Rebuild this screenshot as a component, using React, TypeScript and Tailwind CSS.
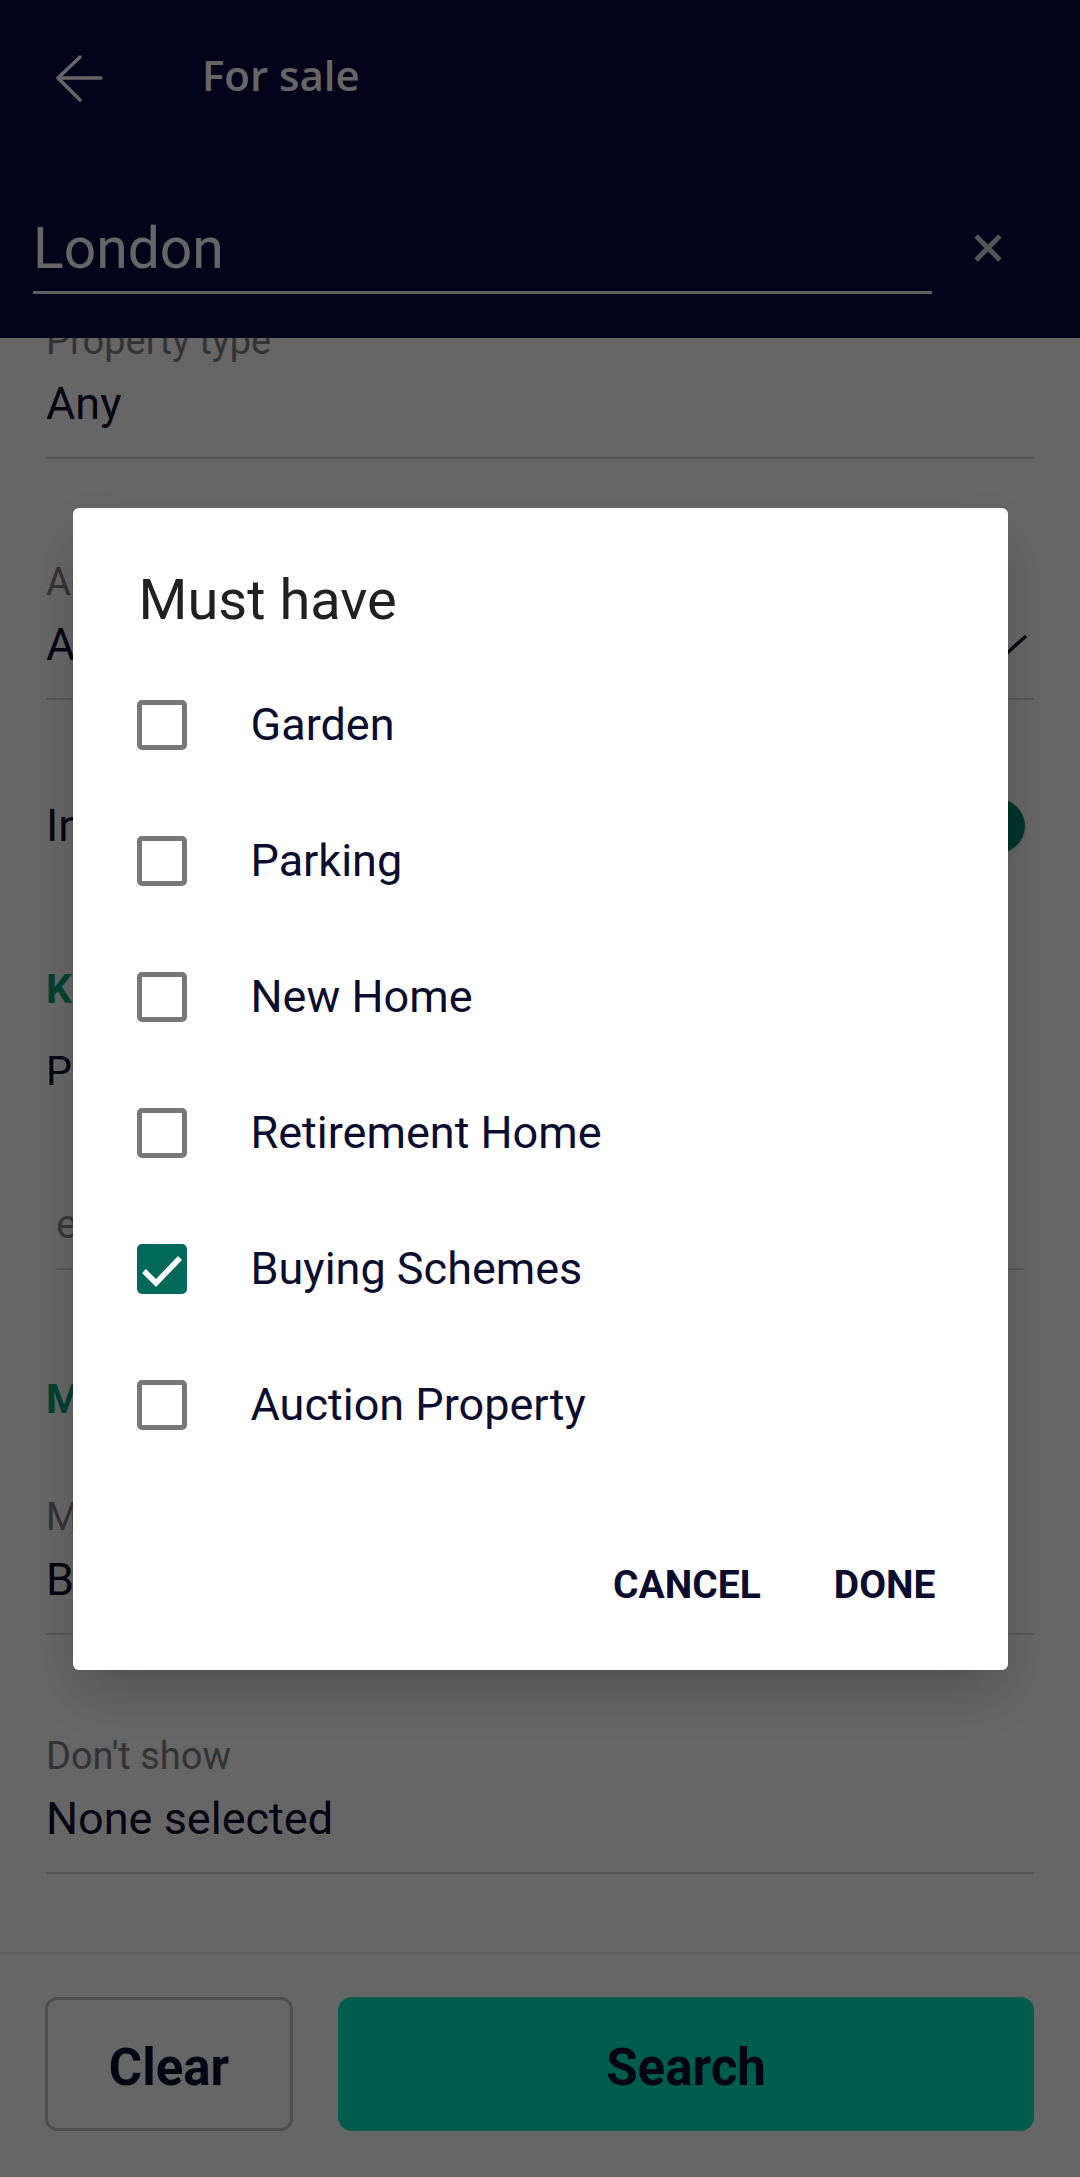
import React from "react";

const options = [
  { label: "Garden", checked: false },
  { label: "Parking", checked: false },
  { label: "New Home", checked: false },
  { label: "Retirement Home", checked: false },
  { label: "Buying Schemes", checked: true },
  { label: "Auction Property", checked: false },
];

function Field({ label, value, className = "" }: { label: string; value: string; className?: string }) {
  return (
    <div className={`border-b-2 border-[#d5d5d5] pb-[26px] ${className}`}>
      <div className="h-[44px] text-[38px] leading-[44px] text-[#808080]">{label}</div>
      <div className="mt-[14px] h-[54px] text-[45px] leading-[54px] text-[#0b0c2e]">{value}</div>
    </div>
  );
}

function Checkbox({ checked }: { checked: boolean }) {
  if (checked) {
    return (
      <div className="w-[50px] h-[50px] rounded-[5px] bg-[#02695a] shrink-0">
        <svg width="50" height="50" viewBox="0 0 50 50">
          <path d="M7 27 L19 39 L43 14" fill="none" stroke="white" strokeWidth="5.5" />
        </svg>
      </div>
    );
  }
  return <div className="w-[50px] h-[50px] rounded-[5px] border-[5px] border-[#777777] shrink-0" />;
}

export default function App() {
  return (
    <div className="relative w-[1080px] h-[2177px] overflow-hidden bg-white font-['Roboto',sans-serif] flex flex-col">
      {/* Top bar */}
      <header className="relative z-[1] h-[338px] shrink-0 bg-[#050841] flex flex-col">
        <div className="mt-[55px] h-[48px] flex items-center pl-[55px]">
          <svg width="48" height="48" viewBox="0 0 48 48">
            <path d="M46 23 H3 M25 2 L3 23 L25 45" fill="none" stroke="white" strokeWidth="3.5" strokeLinecap="round" strokeLinejoin="round" />
          </svg>
          <span className="ml-[99px] mb-[8px] font-['Open_Sans',sans-serif] font-semibold text-[42px] leading-[44px] text-white">
            For sale
          </span>
        </div>
        <div className="mt-[114px] flex items-start pl-[33px] pr-[77px]">
          <div className="w-[900px] border-b-[3px] border-[#eceef5] pb-[10px]">
            <div className="text-[57px] leading-[64px] text-white">London</div>
          </div>
          <svg className="ml-[41px] mt-[16px]" width="30" height="30" viewBox="0 0 30 30">
            <path d="M3 3 L27 27 M27 3 L3 27" stroke="#d4d4d4" strokeWidth="5" />
          </svg>
        </div>
      </header>

      {/* Form content (scrolled) */}
      <main className="flex-1 overflow-hidden px-[46px]">
        <div className="mt-[-19px] flex flex-col">
          <Field label="Property type" value="Any" />
          <div className="mt-[101px] relative">
            <Field label="Added to site" value="Anytime" />
            <svg className="absolute right-[6px] top-[73px]" width="44" height="24" viewBox="0 0 44 24">
              <path d="M2 3 L22 21 L42 3" fill="none" stroke="#1c1c2c" strokeWidth="3.5" />
            </svg>
          </div>
          <div className="mt-[99px] h-[54px] flex items-center justify-between">
            <span className="text-[45px] leading-[54px] text-[#0b0c2e]">Include Under Offer, Sold STC</span>
            <div className="relative w-[90px] h-[54px] mr-[9px]">
              <div className="absolute left-0 right-[6px] top-[10px] h-[34px] rounded-full bg-[#7fd3c1]" />
              <div className="absolute right-0 top-0 w-[54px] h-[54px] rounded-full bg-[#008069] shadow-md" />
            </div>
          </div>
          <div className="mt-[112px] text-[41px] leading-[48px] font-bold text-[#00a076]">Keywords</div>
          <div className="mt-[34px] text-[41px] leading-[48px] text-[#0b0c2e]">Property must include</div>
          <div className="mt-[105px] mx-[10px] border-b-2 border-[#d5d5d5] pb-[20px]">
            <div className="text-[41px] leading-[48px] text-[#8a8a8a]">e.g. conservatory, annex</div>
          </div>
          <div className="mt-[105px] text-[41px] leading-[48px] font-bold text-[#00a076]">More options</div>
          <Field className="mt-[72px]" label="Must have" value="Buying Schemes" />
          <Field className="mt-[99px]" label="Don't show" value="None selected" />
        </div>
      </main>

      {/* Bottom actions */}
      <footer className="h-[225px] shrink-0 border-t-2 border-[#e8e8e8] bg-white flex gap-[45px] pt-[43px] pl-[45px] pr-[46px]">
        <button className="w-[248px] h-[134px] pt-[8px] rounded-[12px] border-[3px] border-[#c2c2c2] text-[51px] font-bold text-[#0b0c2e]">
          Clear
        </button>
        <button className="flex-1 h-[134px] pt-[8px] rounded-[14px] bg-[#00e6bc] text-[51px] font-bold text-[#0b0c2e]">
          Search
        </button>
      </footer>

      {/* Scrim + dialog */}
      <div className="absolute inset-0 z-10 bg-black/60 flex items-center justify-center">
        <div className="w-[935px] rounded-[6px] bg-white shadow-2xl pt-[60px] pb-[35px]">
          <h2 className="pl-[66px] text-[56px] leading-[64px] font-normal text-[#212121]">Must have</h2>
          <ul className="mt-[25px]">
            {options.map((o) => (
              <li key={o.label} className="h-[136px] flex items-center pl-[64px]">
                <Checkbox checked={o.checked} />
                <span className="ml-[64px] text-[45px] leading-[56px] text-[#0b0c2e]">{o.label}</span>
              </li>
            ))}
          </ul>
          <div className="mt-[63px] flex justify-end pr-[50px]">
            <button className="h-[99px] px-[22px] text-[39px] leading-[46px] font-bold text-[#0b0c2e]">CANCEL</button>
            <button className="ml-[29px] h-[99px] px-[22px] text-[39px] leading-[46px] font-bold text-[#0b0c2e]">DONE</button>
          </div>
        </div>
      </div>
    </div>
  );
}
